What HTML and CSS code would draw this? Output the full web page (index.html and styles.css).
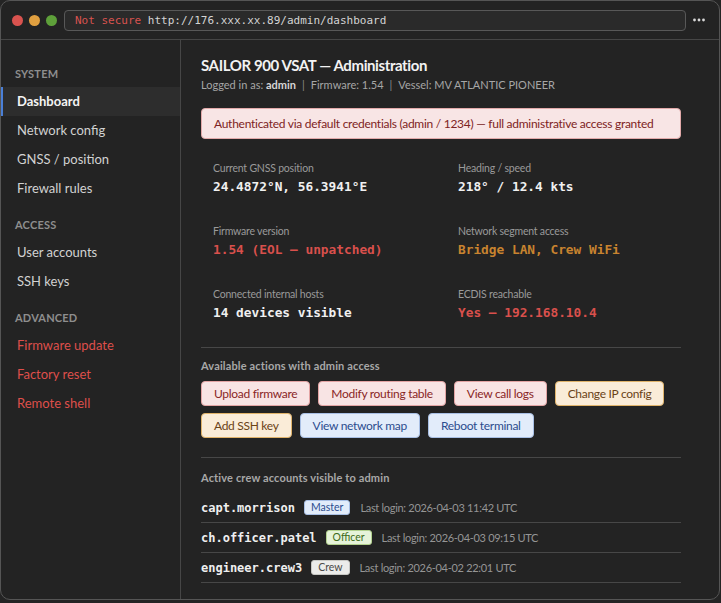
FILE: index.html
```html
<!DOCTYPE html>
<html lang="en">
<head>
<meta charset="utf-8">
<title>SAILOR 900 VSAT — Administration</title>
<link rel="stylesheet" href="styles.css">
</head>
<body>
<div class="window">
  <div class="toolbar">
    <div class="lights">
      <span class="light red"></span>
      <span class="light yellow"></span>
      <span class="light green"></span>
    </div>
    <div class="url"><span class="insecure">Not secure</span> http://176.xxx.xx.89/admin/dashboard</div>
    <div class="more">
      <svg width="12" height="4" viewBox="0 0 12 4"><circle cx="1.5" cy="2" r="1.4" fill="#d8d8d8"/><circle cx="6" cy="2" r="1.4" fill="#d8d8d8"/><circle cx="10.5" cy="2" r="1.4" fill="#d8d8d8"/></svg>
    </div>
  </div>
  <div class="body">
    <nav class="sidebar">
      <div class="section">
        <div class="section-label">System</div>
        <a class="nav-item active">Dashboard</a>
        <a class="nav-item">Network config</a>
        <a class="nav-item">GNSS / position</a>
        <a class="nav-item">Firewall rules</a>
      </div>
      <div class="section">
        <div class="section-label">Access</div>
        <a class="nav-item">User accounts</a>
        <a class="nav-item">SSH keys</a>
      </div>
      <div class="section">
        <div class="section-label">Advanced</div>
        <a class="nav-item danger">Firmware update</a>
        <a class="nav-item danger">Factory reset</a>
        <a class="nav-item danger">Remote shell</a>
      </div>
    </nav>
    <main class="main">
      <h1 class="title">SAILOR 900 VSAT — Administration</h1>
      <p class="subtitle">Logged in as: <b>admin</b><span class="sep">|</span>Firmware: 1.54<span class="sep">|</span>Vessel: MV ATLANTIC PIONEER</p>
      <div class="alert">Authenticated via default credentials (admin / 1234) — full administrative access granted</div>

      <div class="info-grid">
        <div class="cell">
          <div class="label">Current GNSS position</div>
          <div class="value">24.4872°N, 56.3941°E</div>
        </div>
        <div class="cell">
          <div class="label">Heading / speed</div>
          <div class="value">218° / 12.4 kts</div>
        </div>
        <div class="cell">
          <div class="label">Firmware version</div>
          <div class="value red">1.54 (EOL — unpatched)</div>
        </div>
        <div class="cell">
          <div class="label">Network segment access</div>
          <div class="value orange">Bridge LAN, Crew WiFi</div>
        </div>
        <div class="cell">
          <div class="label">Connected internal hosts</div>
          <div class="value">14 devices visible</div>
        </div>
        <div class="cell">
          <div class="label">ECDIS reachable</div>
          <div class="value red">Yes — 192.168.10.4</div>
        </div>
      </div>

      <section class="actions">
        <h2 class="section-title">Available actions with admin access</h2>
        <div class="buttons">
          <button class="btn btn-red">Upload firmware</button>
          <button class="btn btn-red">Modify routing table</button>
          <button class="btn btn-red">View call logs</button>
          <button class="btn btn-orange">Change IP config</button>
          <button class="btn btn-orange">Add SSH key</button>
          <button class="btn btn-blue">View network map</button>
          <button class="btn btn-blue">Reboot terminal</button>
        </div>
      </section>

      <section class="crew">
        <h2 class="section-title">Active crew accounts visible to admin</h2>
        <div class="crew-row">
          <span class="crew-name">capt.morrison</span>
          <span class="badge badge-blue">Master</span>
          <span class="last-login">Last login: 2026-04-03 11:42 UTC</span>
        </div>
        <div class="crew-row">
          <span class="crew-name">ch.officer.patel</span>
          <span class="badge badge-green">Officer</span>
          <span class="last-login">Last login: 2026-04-03 09:15 UTC</span>
        </div>
        <div class="crew-row">
          <span class="crew-name">engineer.crew3</span>
          <span class="badge badge-grey">Crew</span>
          <span class="last-login">Last login: 2026-04-02 22:01 UTC</span>
        </div>
      </section>
    </main>
  </div>
</div>
</body>
</html>
```

FILE: styles.css
```css
* {
  box-sizing: border-box;
  margin: 0;
  padding: 0;
}

html, body {
  background: #242424;
}

body {
  margin: 0;
  font-family: Lato, "Noto Sans", "Liberation Sans", sans-serif;
  color: #e6e6e6;
}

.window {
  width: 720px;
  height: 600px;
  border: 1px solid #555;
  border-radius: 10px;
  background: #232323;
  display: flex;
  flex-direction: column;
  overflow: hidden;
}

/* toolbar */
.toolbar {
  flex: none;
  height: 39px;
  border-bottom: 1px solid #464646;
  display: flex;
  align-items: center;
  padding-left: 11px;
}

.lights {
  display: flex;
  gap: 6px;
}

.light {
  width: 11px;
  height: 11px;
  border-radius: 50%;
  display: block;
}

.light.red { background: #d9534f; }
.light.yellow { background: #e0a040; }
.light.green { background: #5ea03a; }

.url {
  flex: 1;
  margin-left: 7px;
  height: 21px;
  border: 1px solid #585858;
  border-radius: 4px;
  background: #2a2a2a;
  padding-left: 10px;
  font-family: "DejaVu Sans Mono", "Liberation Mono", monospace;
  font-size: 11px;
  line-height: 19px;
  color: #d4d4d4;
  white-space: nowrap;
}

.insecure {
  color: #d9534f;
}

.more {
  width: 12px;
  margin: 0 14px 0 7px;
  display: flex;
  align-items: center;
}

.more svg { display: block; }

/* body */
.body {
  flex: 1;
  display: flex;
  min-height: 0;
}

.sidebar {
  width: 180px;
  flex: none;
  border-right: 1px solid #464646;
  padding-top: 27px;
}

.section + .section {
  margin-top: 15px;
}

.section-label {
  font-size: 11px;
  line-height: 14px;
  font-weight: 700;
  letter-spacing: 0.2px;
  text-transform: uppercase;
  color: #8e8e8e;
  padding-left: 14px;
  margin-bottom: 6px;
}

.nav-item {
  display: block;
  height: 29px;
  line-height: 29px;
  padding-left: 16px;
  font-size: 13px;
  color: #d2d2d2;
  cursor: pointer;
}

.nav-item.active {
  background: #2d2d2d;
  border-left: 2px solid #4a7fd6;
  padding-left: 14px;
  color: #f4f4f4;
  font-weight: 700;
}

.nav-item.danger {
  color: #de4f4b;
}

/* main */
.main {
  flex: 1;
  padding: 15px 38px 0 20px;
  min-width: 0;
}

.title {
  font-size: 15px;
  line-height: 20px;
  font-weight: 700;
  letter-spacing: -0.4px;
  color: #f2f2f2;
}

.subtitle {
  margin-top: 3px;
  font-size: 11px;
  line-height: 14px;
  color: #a6a6a6;
}

.subtitle b {
  color: #d6d6d6;
  font-weight: 700;
}

.sep {
  margin: 0 6px;
  color: #8a8a8a;
}

.alert {
  margin-top: 16px;
  background: #f8e5e5;
  border: 1px solid #e2a9a9;
  border-radius: 4px;
  padding: 7px 12px;
  font-size: 12px;
  line-height: 15px;
  letter-spacing: -0.27px;
  color: #7e2323;
  white-space: nowrap;
}

.info-grid {
  display: grid;
  grid-template-columns: 1fr 1fr;
  column-gap: 34px;
  row-gap: 28px;
  padding: 22px 12px 25px 12px;
}

.label {
  font-size: 10.5px;
  line-height: 14px;
  letter-spacing: -0.2px;
  color: #9a9a9a;
}

.value {
  margin-top: 3px;
  font-family: "DejaVu Sans Mono", "Liberation Mono", monospace;
  font-size: 12.8px;
  line-height: 18px;
  font-weight: 700;
  color: #f0f0f0;
  white-space: nowrap;
}

.value.red { color: #d9504c; }
.value.orange { color: #c8832f; }

.actions {
  border-top: 1px solid #474747;
  padding: 11px 0 19px;
}

.section-title {
  font-size: 11px;
  line-height: 14px;
  font-weight: 700;
  letter-spacing: 0.15px;
  color: #a8a8a8;
  margin-bottom: 8px;
}

.buttons {
  display: flex;
  flex-wrap: wrap;
  gap: 7px 8px;
}

.btn {
  height: 25px;
  padding: 0 12px;
  border: 1px solid;
  border-radius: 4px;
  font-family: Lato, "Noto Sans", "Liberation Sans", sans-serif;
  font-size: 12px;
  font-weight: 400;
  letter-spacing: -0.3px;
  cursor: pointer;
}

.btn-red {
  background: #f8e4e4;
  border-color: #e3a4a4;
  color: #8a2626;
}

.btn-orange {
  background: #faecd8;
  border-color: #e0b36a;
  color: #6a4317;
}

.btn-blue {
  background: #e2ecfa;
  border-color: #a8bfe4;
  color: #2c4c8e;
}

.crew {
  border-top: 1px solid #474747;
  padding-top: 13px;
}

.crew .section-title {
  margin-bottom: 8px;
}

.crew-row {
  height: 30px;
  border-bottom: 1px solid #474747;
  display: flex;
  align-items: center;
}

.crew-name {
  font-family: "DejaVu Sans Mono", "Liberation Mono", monospace;
  font-size: 12px;
  font-weight: 700;
  color: #efefef;
  margin-right: 9px;
}

.badge {
  height: 15px;
  line-height: 13px;
  padding: 0 6px;
  border: 1px solid;
  border-radius: 3px;
  font-size: 10.5px;
  margin-right: 10px;
}

.badge-blue {
  background: #e2ecfa;
  border-color: #a8bfe4;
  color: #2c4c8e;
}

.badge-green {
  background: #e6f3d9;
  border-color: #b2d18e;
  color: #3c6a18;
}

.badge-grey {
  background: #ececea;
  border-color: #c8c8c4;
  color: #4a4a48;
}

.last-login {
  font-size: 11px;
  letter-spacing: -0.3px;
  color: #959595;
}
```
